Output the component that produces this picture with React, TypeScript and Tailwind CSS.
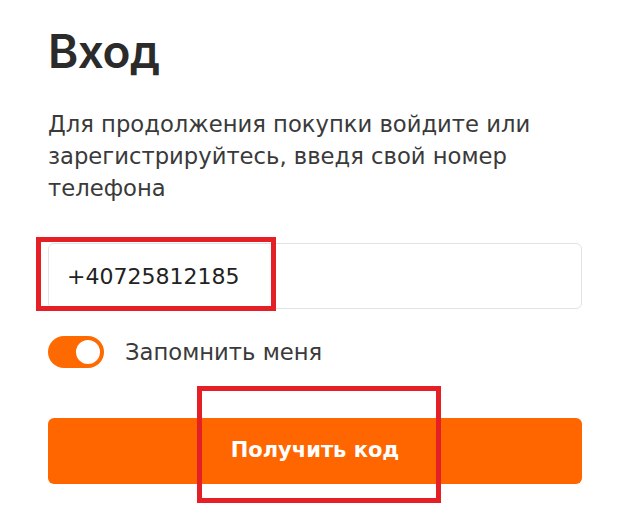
export default function App() {
  return (
    <div className="relative h-[509px] w-[624px] overflow-hidden bg-white font-['DejaVu_Sans',sans-serif] text-[#2b2b2b]">
      <div className="pl-12 pr-[42px] pt-[23px]">
        <h1 className="font-['Inter',sans-serif] text-[46px] font-semibold leading-[56px] tracking-[-0.5px]">Вход</h1>
        <p className="mt-[29px] whitespace-nowrap text-[22.7px] leading-[32px] text-[#3a3a3a]">
          Для продолжения покупки войдите или
          <br />
          зарегистрируйтесь, введя свой номер
          <br />
          телефона
        </p>
        <div className="mt-[39px] flex h-[66px] items-center rounded-md border border-[#e3e3e3] pl-[18px] text-[22px] text-[#222]">
          +40725812185
        </div>
        <label className="mt-[26px] flex items-center">
          <span className="flex h-[32px] w-[56px] items-center justify-end rounded-full bg-[#ff6a00] pr-[2px]">
            <span className="h-[28px] w-[28px] rounded-full border-2 border-[#ff6a00] bg-white" />
          </span>
          <span className="ml-[21px] text-[22.7px] text-[#3a3a3a]">Запомнить меня</span>
        </label>
        <button className="mt-[49px] flex h-[66px] w-full items-center justify-center rounded-md bg-[#ff6600] text-[21px] font-bold text-white">
          Получить код
        </button>
      </div>

      {/* annotation boxes */}
      <div className="pointer-events-none absolute left-[36px] top-[237px] h-[74px] w-[240px] border-[5px] border-[#e41f26]" />
      <div className="pointer-events-none absolute left-[197px] top-[386px] h-[117px] w-[244px] border-[5px] border-[#e41f26]" />
    </div>
  )
}
